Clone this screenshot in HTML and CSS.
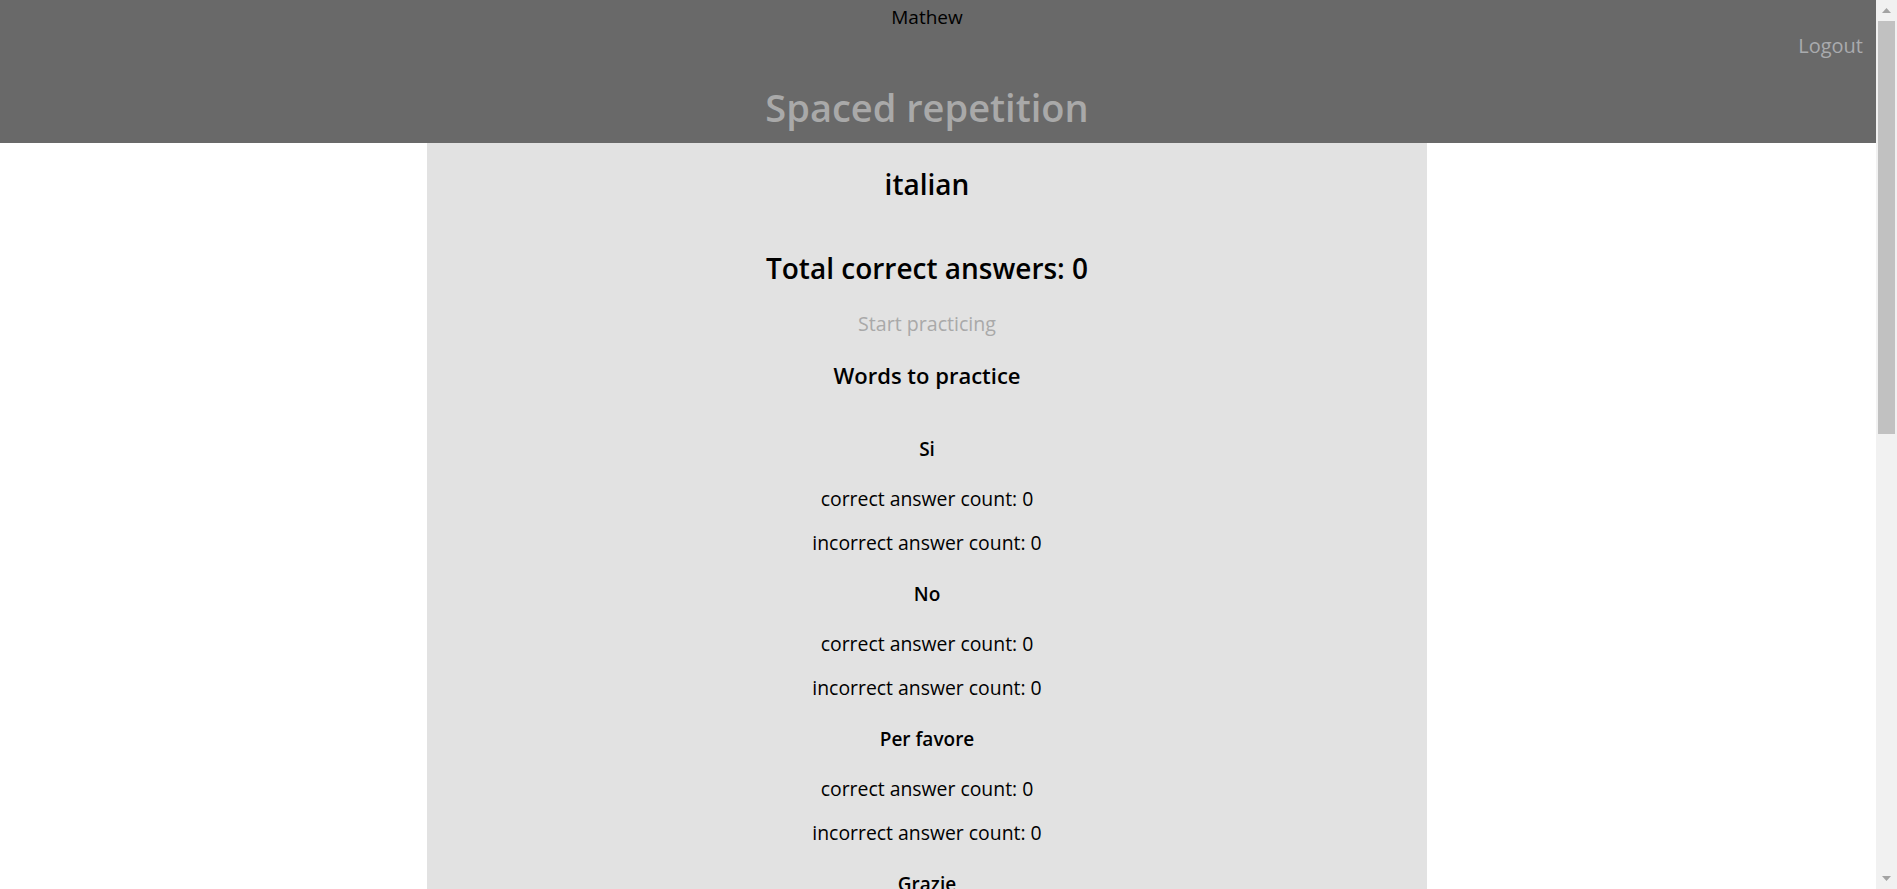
FILE: index.html
```html
<!DOCTYPE html>
<html lang="en">
<head>
<meta charset="utf-8">
<title>Spaced repetition</title>
<link rel="stylesheet" href="styles.css">
</head>
<body>
<div class="app">
  <header class="site-header">
    <div class="user">Mathew</div>
    <nav class="nav"><a class="logout" href="#">Logout</a></nav>
    <h1 class="title">Spaced repetition</h1>
  </header>
  <main class="page">
    <section class="dashboard">
      <h2 class="lang">italian</h2>
      <h2 class="total">Total correct answers: 0</h2>
      <a class="start" href="#">Start practicing</a>
      <h3 class="words-title">Words to practice</h3>
      <ul class="word-list">
        <li class="word">
          <h4 class="word-name">Si</h4>
          <p class="count">correct answer count: 0</p>
          <p class="count">incorrect answer count: 0</p>
        </li>
        <li class="word">
          <h4 class="word-name">No</h4>
          <p class="count">correct answer count: 0</p>
          <p class="count">incorrect answer count: 0</p>
        </li>
        <li class="word">
          <h4 class="word-name">Per favore</h4>
          <p class="count">correct answer count: 0</p>
          <p class="count">incorrect answer count: 0</p>
        </li>
        <li class="word">
          <h4 class="word-name">Grazie</h4>
          <p class="count">correct answer count: 0</p>
          <p class="count">incorrect answer count: 0</p>
        </li>
        <li class="word">
          <h4 class="word-name">Prego</h4>
          <p class="count">correct answer count: 0</p>
          <p class="count">incorrect answer count: 0</p>
        </li>
        <li class="word">
          <h4 class="word-name">Ciao</h4>
          <p class="count">correct answer count: 0</p>
          <p class="count">incorrect answer count: 0</p>
        </li>
        <li class="word">
          <h4 class="word-name">Scusi</h4>
          <p class="count">correct answer count: 0</p>
          <p class="count">incorrect answer count: 0</p>
        </li>
        <li class="word">
          <h4 class="word-name">Buongiorno</h4>
          <p class="count">correct answer count: 0</p>
          <p class="count">incorrect answer count: 0</p>
        </li>
        <li class="word">
          <h4 class="word-name">Arrivederci</h4>
          <p class="count">correct answer count: 0</p>
          <p class="count">incorrect answer count: 0</p>
        </li>
      </ul>
    </section>
  </main>
</div>
<div class="scrollbar" aria-hidden="true">
  <div class="sb-btn">
    <svg width="9" height="5" viewBox="0 0 9 5"><polygon points="0,5 4.5,0 9,5" fill="#a3a3a3"/></svg>
  </div>
  <div class="sb-track"><div class="sb-thumb"></div></div>
  <div class="sb-btn">
    <svg width="9" height="5" viewBox="0 0 9 5"><polygon points="0,0 4.5,5 9,0" fill="#a3a3a3"/></svg>
  </div>
</div>
</body>
</html>
```
FILE: styles.css
```css
body {
  display: flex;
  align-items: flex-start;
  margin: 0;
  background: #ffffff;
  font-family: "Open Sans", "Noto Sans", sans-serif;
  font-size: 19px;
  color: #000000;
}

.app {
  flex: 1;
  min-width: 0;
}

.scrollbar {
  display: flex;
  flex-direction: column;
  flex: 0 0 21px;
  width: 21px;
  height: 100vh;
  background: #f1f1f1;
}

.sb-btn {
  display: flex;
  align-items: center;
  justify-content: center;
  height: 21px;
}

.sb-track {
  flex: 1;
  padding: 0 2px;
}

.sb-thumb {
  height: 413px;
  background: #c1c1c1;
}

.site-header {
  box-sizing: border-box;
  height: 143px;
  padding-top: 5px;
  background: #696969;
}

.user {
  padding-right: 22px;
  text-align: center;
  font-size: 19px;
  line-height: 24px;
}

.nav {
  margin-top: 5px;
  padding-right: 13px;
  text-align: right;
  line-height: 24px;
}

.logout {
  color: #a9abae;
  font-size: 20px;
  text-decoration: none;
}

.title {
  margin: 27px 0 0;
  padding-right: 22px;
  text-align: center;
  font-size: 38px;
  line-height: 44px;
  font-weight: 600;
  color: #a9a9a9;
}

.page {
  display: flex;
  justify-content: center;
  padding-right: 22px;
}

.dashboard {
  width: 1000px;
  padding: 24px 0 88px;
  background: #e2e2e2;
  text-align: center;
}

.lang,
.total {
  margin: 0;
  font-size: 28px;
  line-height: 34px;
  font-weight: 600;
}

.total {
  margin-top: 50px;
}

.start {
  display: block;
  margin-top: 27px;
  font-size: 19.6px;
  line-height: 24px;
  color: #a9a9a9;
  text-decoration: none;
}

.words-title {
  margin: 25px 0 48px;
  font-size: 22px;
  line-height: 28px;
  font-weight: 600;
}

.word-list {
  margin: 0;
  padding: 0;
  list-style: none;
}

.word-name {
  margin: 27px 0 26px;
  font-size: 19px;
  line-height: 24px;
  font-weight: 600;
}

.count {
  margin: 20px 0;
  font-size: 19.4px;
  line-height: 24px;
}
```
